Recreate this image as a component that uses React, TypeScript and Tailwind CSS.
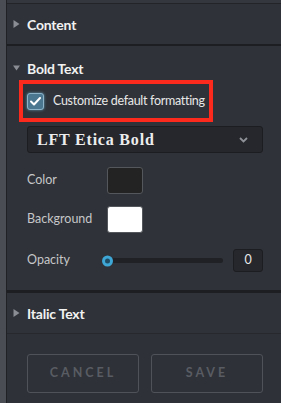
import React from 'react';

const Caret: React.FC<{ open?: boolean }> = ({ open }) => (
  <svg width="7" height="8" viewBox="0 0 7 8" className="shrink-0">
    {open ? (
      <polygon points="0,1.5 7,1.5 3.5,6.5" fill="#8a8d93" />
    ) : (
      <polygon points="0.5,0 6.5,4 0.5,8" fill="#8a8d93" />
    )}
  </svg>
);

const SectionHeader: React.FC<{ title: string; open?: boolean }> = ({ title, open }) => (
  <div className="flex items-center gap-[7px] pl-[6px]">
    <Caret open={open} />
    <span className="text-[14px] font-bold text-[#f2f2f2] tracking-[-0.2px]">{title}</span>
  </div>
);

export default function App() {
  return (
    <div
      className="w-[281px] h-[403px] flex bg-[#2e3137] overflow-hidden"
      style={{ fontFamily: 'Lato, "Open Sans", sans-serif' }}
    >
      <div className="w-[6px] bg-[#4a4d53] shrink-0" />
      <div className="w-[1px] bg-[#1f2125] shrink-0" />

      <div className="flex-1 flex flex-col">
        <div className="h-[3px] bg-[#34373d] border-b border-[#222428] box-content" />

        {/* Content */}
        <div className="h-[40px] flex items-center bg-[#2f3238]">
          <SectionHeader title="Content" />
        </div>
        <div className="h-[2px] bg-[#1c1e22]" />

        {/* Bold Text */}
        <div className="flex flex-col bg-[#2f3238] pb-[18px]">
          <div className="h-[20px] mt-[12px] flex items-center">
            <SectionHeader title="Bold Text" open />
          </div>

          <div className="ml-[12px] mt-[2px] w-[194px] h-[42px] border-[4px] border-[#fb2a1c] flex items-center pl-[4px] gap-[9px]">
            <div className="w-[17px] h-[17px] rounded-[3px] bg-[#4b7790] border border-[#8db3c8] shadow-[0_0_3px_#5d9ab8] flex items-center justify-center">
              <svg width="11" height="9" viewBox="0 0 11 9">
                <polyline points="1,4.5 4,7.5 10,1" fill="none" stroke="#ffffff" strokeWidth="2" strokeLinecap="round" strokeLinejoin="round" />
              </svg>
            </div>
            <span className="text-[12.5px] text-[#e8e8e8] tracking-[-0.3px]">Customize default formatting</span>
          </div>

          <div className="ml-[20px] mt-[4px] w-[236px] h-[27px] rounded-[3px] bg-[#25272c] border border-[#1b1d20] flex items-center justify-between pl-[9px] pr-[14px]">
            <span
              className="text-[16px] font-bold text-[#ececec] tracking-[0.8px]"
              style={{ fontFamily: '"Liberation Serif", "DejaVu Serif", serif' }}
            >
              LFT Etica Bold
            </span>
            <svg width="9" height="6" viewBox="0 0 9 6">
              <polyline points="1,1 4.5,4.5 8,1" fill="none" stroke="#8e9197" strokeWidth="1.8" />
            </svg>
          </div>

          <div className="ml-[20px] mt-[14px] flex items-center">
            <span className="w-[80px] text-[12.5px] text-[#c6c7c9]">Color</span>
            <div className="w-[36px] h-[27px] rounded-[3px] bg-[#232323] border border-[#54575c]" />
          </div>

          <div className="ml-[20px] mt-[12px] flex items-center">
            <span className="w-[80px] text-[12.5px] text-[#c6c7c9]">Background</span>
            <div className="w-[36px] h-[27px] rounded-[3px] bg-white border border-[#54575c]" />
          </div>

          <div className="ml-[20px] mt-[16px] flex items-center h-[23px]">
            <span className="w-[75px] text-[12.5px] text-[#c6c7c9]">Opacity</span>
            <div className="relative w-[121px] h-[5px] rounded-full bg-[#1f2125]">
              <div className="absolute left-0 top-1/2 -translate-y-1/2 w-[11px] h-[11px] rounded-full bg-[#3fa7d6] flex items-center justify-center">
                <div className="w-[5px] h-[5px] rounded-full bg-[#1f4d66]" />
              </div>
            </div>
            <div className="ml-[10px] w-[30px] h-[23px] rounded-[3px] bg-[#25272c] border border-[#1b1d20] flex items-center justify-center text-[12.5px] text-[#e8e8e8]">
              0
            </div>
          </div>
        </div>

        <div className="h-[3px] bg-[#1c1e22]" />

        {/* Italic Text */}
        <div className="h-[40px] flex items-center bg-[#2f3238] border-b border-[#26282d] box-content">
          <SectionHeader title="Italic Text" />
        </div>

        <div className="flex-1 bg-[#2e3137] flex gap-[12px] pl-[20px] pt-[20px]">
          <button className="w-[112px] h-[39px] rounded-[3px] border border-[#4f5259] text-[12.5px] font-bold tracking-[3px] text-[#595c63]">
            CANCEL
          </button>
          <button className="w-[112px] h-[39px] rounded-[3px] border border-[#4f5259] text-[12.5px] font-bold tracking-[3px] text-[#595c63]">
            SAVE
          </button>
        </div>
      </div>
    </div>
  );
}
